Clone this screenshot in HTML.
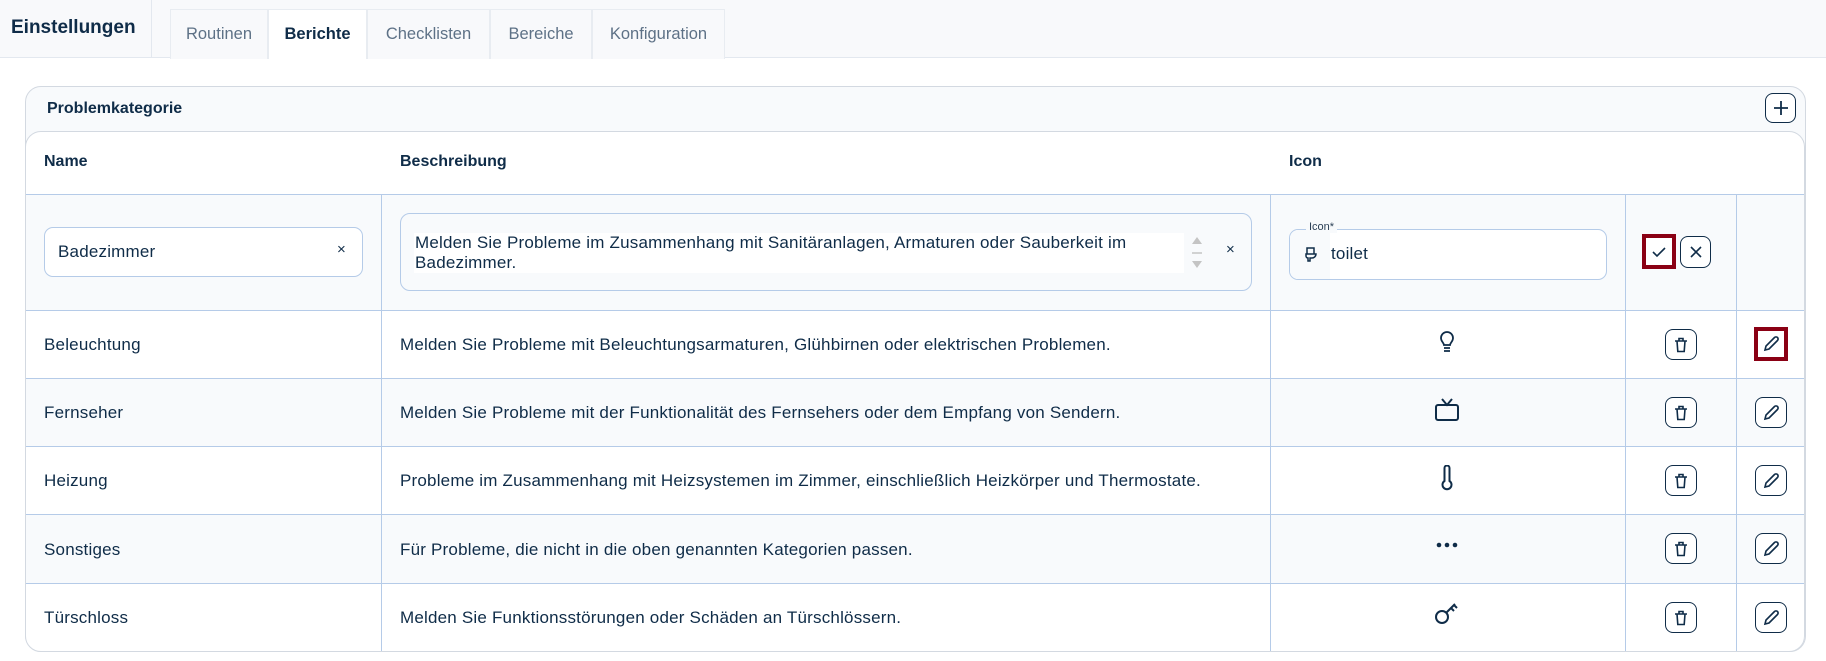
<!DOCTYPE html>
<html><head><meta charset="utf-8"><style>
*{box-sizing:border-box;margin:0;padding:0}
body{width:1826px;height:661px;background:#fff;font-family:"Liberation Sans",sans-serif;color:#0f2c48;position:relative;overflow:hidden}
.a{position:absolute}
.top{left:0;top:0;width:1826px;height:58px;background:#f8f9fb;border-bottom:1px solid #e3e8ef}
.tab{position:absolute;top:9px;height:50px;border:1px solid #e8ecf1;border-bottom:none;font-size:16.5px;color:#5d7186;display:flex;align-items:center;justify-content:center;background:#f8f9fb}
.card{left:25px;top:86px;width:1781px;height:566px;border:1.5px solid #d3d9e1;border-radius:16px;background:#f8fafc}
.inner{left:25px;top:131px;width:1780px;height:521px;background:#fff;border:1.5px solid #d3d9e1;border-radius:16px}
.row{position:absolute;left:26px;width:1778px}
.hl{position:absolute;left:26px;width:1778px;height:1px;background:#b5cbe8}
.vl{position:absolute;width:1px;background:#b5cbe8;top:194px;height:457px}
.t{position:absolute;font-size:17px;letter-spacing:.2px;white-space:nowrap}
.h{position:absolute;font-size:16px;font-weight:bold;white-space:nowrap}
.btn{position:absolute;border:1.5px solid #0f2c48;border-radius:8px;width:32px;height:31px;display:flex;align-items:center;justify-content:center;background:#fff}
.ic{position:absolute}
</style></head><body>
<div class="a top"></div>
<div class="h" style="left:11px;top:17px;font-size:19px">Einstellungen</div>
<div class="a" style="left:151px;top:0;width:1px;height:58px;background:#e3e8ef"></div>
<div class="tab" style="left:170px;width:98px">Routinen</div>
<div class="tab" style="left:268px;width:99px;background:#fff;color:#0f2c48;font-weight:bold;height:50px">Berichte</div>
<div class="tab" style="left:367px;width:123px">Checklisten</div>
<div class="tab" style="left:490px;width:102px">Bereiche</div>
<div class="tab" style="left:592px;width:133px">Konfiguration</div>

<div class="a card"></div>
<div class="h" style="left:47px;top:100px">Problemkategorie</div>
<div class="btn" style="left:1765px;top:93px;width:31px;height:30px"><svg width="16" height="16" viewBox="0 0 16 16"><path d="M8 1v14M1 8h14" stroke="#0f2c48" stroke-width="1.8"/></svg></div>
<div class="a inner"></div>

<div class="row" style="top:194px;height:116px;background:#f8fafc"></div>
<div class="row" style="top:378px;height:68px;background:#f8fafc"></div>
<div class="row" style="top:514px;height:69px;background:#f8fafc"></div>
<div class="hl" style="top:194px"></div>
<div class="hl" style="top:310px"></div>
<div class="hl" style="top:378px"></div>
<div class="hl" style="top:446px"></div>
<div class="hl" style="top:514px"></div>
<div class="hl" style="top:583px"></div>
<div class="vl" style="left:381px"></div>
<div class="vl" style="left:1270px"></div>
<div class="vl" style="left:1625px"></div>
<div class="vl" style="left:1736px"></div>

<div class="h" style="left:44px;top:153px">Name</div>
<div class="h" style="left:400px;top:153px">Beschreibung</div>
<div class="h" style="left:1289px;top:153px">Icon</div>

<div class="a" style="left:44px;top:227px;width:319px;height:50px;border:1px solid #b5cbe8;border-radius:9px;background:#fff"></div>
<div class="t" style="left:58px;top:242px">Badezimmer</div>
<div class="t" style="left:337px;top:241px;font-size:15px">×</div>
<div class="a" style="left:400px;top:213px;width:852px;height:78px;border:1px solid #b5cbe8;border-radius:10px;background:#f8fafc"></div>
<div class="a" style="left:414px;top:233px;width:770px;height:40px;background:#fff"></div>
<div class="t" style="left:415px;top:233px;line-height:20px">Melden Sie Probleme im Zusammenhang mit Sanitäranlagen, Armaturen oder Sauberkeit im<br>Badezimmer.</div>
<svg class="ic" style="left:1191px;top:236px" width="12" height="34" viewBox="0 0 12 34"><path d="M6 1L11 8H1z" fill="#c4c4c4"/><path d="M1 17h10" stroke="#c4c4c4" stroke-width="1.5"/><path d="M6 32L11 25H1z" fill="#c4c4c4"/></svg>
<div class="t" style="left:1226px;top:241px;font-size:15px">×</div>
<div class="a" style="left:1289px;top:229px;width:318px;height:51px;border:1px solid #b5cbe8;border-radius:9px;background:#fff"></div>
<div class="a" style="left:1290px;top:230px;width:40px;height:49px;background:#f8fafc;border-radius:8px 0 0 8px"></div>
<div class="a" style="left:1306px;top:221px;padding:0 3px;background:#f8fafc;font-size:11px;color:#2b3f55">Icon*</div>
<svg class="ic" style="left:1304px;top:247px" width="14" height="15" viewBox="0 0 14 15" fill="none" stroke="#0f2c48" stroke-width="1.5"><path d="M3 1h7v6H3zM2 7h10a4 4 0 0 1-4 4H6v3H4v-3a2 2 0 0 1-2-2z"/></svg>
<div class="t" style="left:1331px;top:244px">toilet</div>
<div class="a" style="left:1642px;top:234px;width:34px;height:35px;border:4px solid #8a0014;background:#fff;display:flex;align-items:center;justify-content:center"><svg width="14" height="12" viewBox="0 0 14 12"><path d="M1 6l4 4 8-8" fill="none" stroke="#0f2c48" stroke-width="1.6"/></svg></div>
<div class="btn" style="left:1680px;top:236px;width:31px;height:32px"><svg width="12" height="12" viewBox="0 0 12 12"><path d="M1 1l10 10M11 1L1 11" stroke="#0f2c48" stroke-width="1.6"/></svg></div>

<div class="t" style="left:44px;top:335px">Beleuchtung</div>
<div class="t" style="left:400px;top:335px">Melden Sie Probleme mit Beleuchtungsarmaturen, Glühbirnen oder elektrischen Problemen.</div>
<div class="t" style="left:44px;top:403px">Fernseher</div>
<div class="t" style="left:400px;top:403px">Melden Sie Probleme mit der Funktionalität des Fernsehers oder dem Empfang von Sendern.</div>
<div class="t" style="left:44px;top:471px">Heizung</div>
<div class="t" style="left:400px;top:471px">Probleme im Zusammenhang mit Heizsystemen im Zimmer, einschließlich Heizkörper und Thermostate.</div>
<div class="t" style="left:44px;top:540px">Sonstiges</div>
<div class="t" style="left:400px;top:540px">Für Probleme, die nicht in die oben genannten Kategorien passen.</div>
<div class="t" style="left:44px;top:608px">Türschloss</div>
<div class="t" style="left:400px;top:608px">Melden Sie Funktionsstörungen oder Schäden an Türschlössern.</div>

<svg class="ic" style="left:1438px;top:330px" width="18" height="24" viewBox="0 0 18 24" fill="none" stroke="#0f2c48" stroke-width="1.8"><path d="M6 15c0-2-3-3.5-3-7a6 6 0 0 1 12 0c0 3.5-3 5-3 7z"/><path d="M6 18h6M6 21h6"/></svg>
<svg class="ic" style="left:1434px;top:397px" width="26" height="24" viewBox="0 0 26 24" fill="none" stroke="#0f2c48" stroke-width="2"><rect x="2" y="8" width="22" height="15" rx="2"/><path d="M8 2l5 6 5-6"/></svg>
<svg class="ic" style="left:1440px;top:465px" width="14" height="26" viewBox="0 0 14 26" fill="none" stroke="#0f2c48" stroke-width="2"><path d="M4.5 16V3a2.5 2.5 0 0 1 5 0v13a4.5 4.5 0 1 1-5 0z"/></svg>
<svg class="ic" style="left:1436px;top:541px" width="22" height="8" viewBox="0 0 22 8" fill="#0f2c48"><circle cx="3" cy="4" r="2.3"/><circle cx="11" cy="4" r="2.3"/><circle cx="19" cy="4" r="2.3"/></svg>
<svg class="ic" style="left:1434px;top:600px" width="28" height="26" viewBox="0 0 28 26" fill="none" stroke="#0f2c48" stroke-width="2"><circle cx="8" cy="17" r="6"/><path d="M12.5 12.5L21 4M17 8l3 3M20 5l3 3"/></svg>

<div class="btn" style="left:1665px;top:329px"><svg width="14" height="16" viewBox="0 0 14 16" fill="none" stroke="#0f2c48" stroke-width="1.6"><path d="M1 4h12M5 4V1.5h4V4M3 4l.8 10.5h6.4L11 4"/></svg></div>
<div class="a" style="left:1754px;top:327px;width:34px;height:34px;border:4px solid #8a0014;background:#fff;display:flex;align-items:center;justify-content:center"><svg width="16" height="16" viewBox="0 0 16 16" fill="none" stroke="#0f2c48" stroke-width="1.6"><path d="M2 14l1-4 8.5-8.5a2 2 0 0 1 3 3L6 13z"/></svg></div>
<div class="btn" style="left:1665px;top:397px"><svg width="14" height="16" viewBox="0 0 14 16" fill="none" stroke="#0f2c48" stroke-width="1.6"><path d="M1 4h12M5 4V1.5h4V4M3 4l.8 10.5h6.4L11 4"/></svg></div>
<div class="btn" style="left:1755px;top:397px"><svg width="16" height="16" viewBox="0 0 16 16" fill="none" stroke="#0f2c48" stroke-width="1.6"><path d="M2 14l1-4 8.5-8.5a2 2 0 0 1 3 3L6 13z"/></svg></div>
<div class="btn" style="left:1665px;top:465px"><svg width="14" height="16" viewBox="0 0 14 16" fill="none" stroke="#0f2c48" stroke-width="1.6"><path d="M1 4h12M5 4V1.5h4V4M3 4l.8 10.5h6.4L11 4"/></svg></div>
<div class="btn" style="left:1755px;top:465px"><svg width="16" height="16" viewBox="0 0 16 16" fill="none" stroke="#0f2c48" stroke-width="1.6"><path d="M2 14l1-4 8.5-8.5a2 2 0 0 1 3 3L6 13z"/></svg></div>
<div class="btn" style="left:1665px;top:533px"><svg width="14" height="16" viewBox="0 0 14 16" fill="none" stroke="#0f2c48" stroke-width="1.6"><path d="M1 4h12M5 4V1.5h4V4M3 4l.8 10.5h6.4L11 4"/></svg></div>
<div class="btn" style="left:1755px;top:533px"><svg width="16" height="16" viewBox="0 0 16 16" fill="none" stroke="#0f2c48" stroke-width="1.6"><path d="M2 14l1-4 8.5-8.5a2 2 0 0 1 3 3L6 13z"/></svg></div>
<div class="btn" style="left:1665px;top:602px"><svg width="14" height="16" viewBox="0 0 14 16" fill="none" stroke="#0f2c48" stroke-width="1.6"><path d="M1 4h12M5 4V1.5h4V4M3 4l.8 10.5h6.4L11 4"/></svg></div>
<div class="btn" style="left:1755px;top:602px"><svg width="16" height="16" viewBox="0 0 16 16" fill="none" stroke="#0f2c48" stroke-width="1.6"><path d="M2 14l1-4 8.5-8.5a2 2 0 0 1 3 3L6 13z"/></svg></div>
</body></html>
